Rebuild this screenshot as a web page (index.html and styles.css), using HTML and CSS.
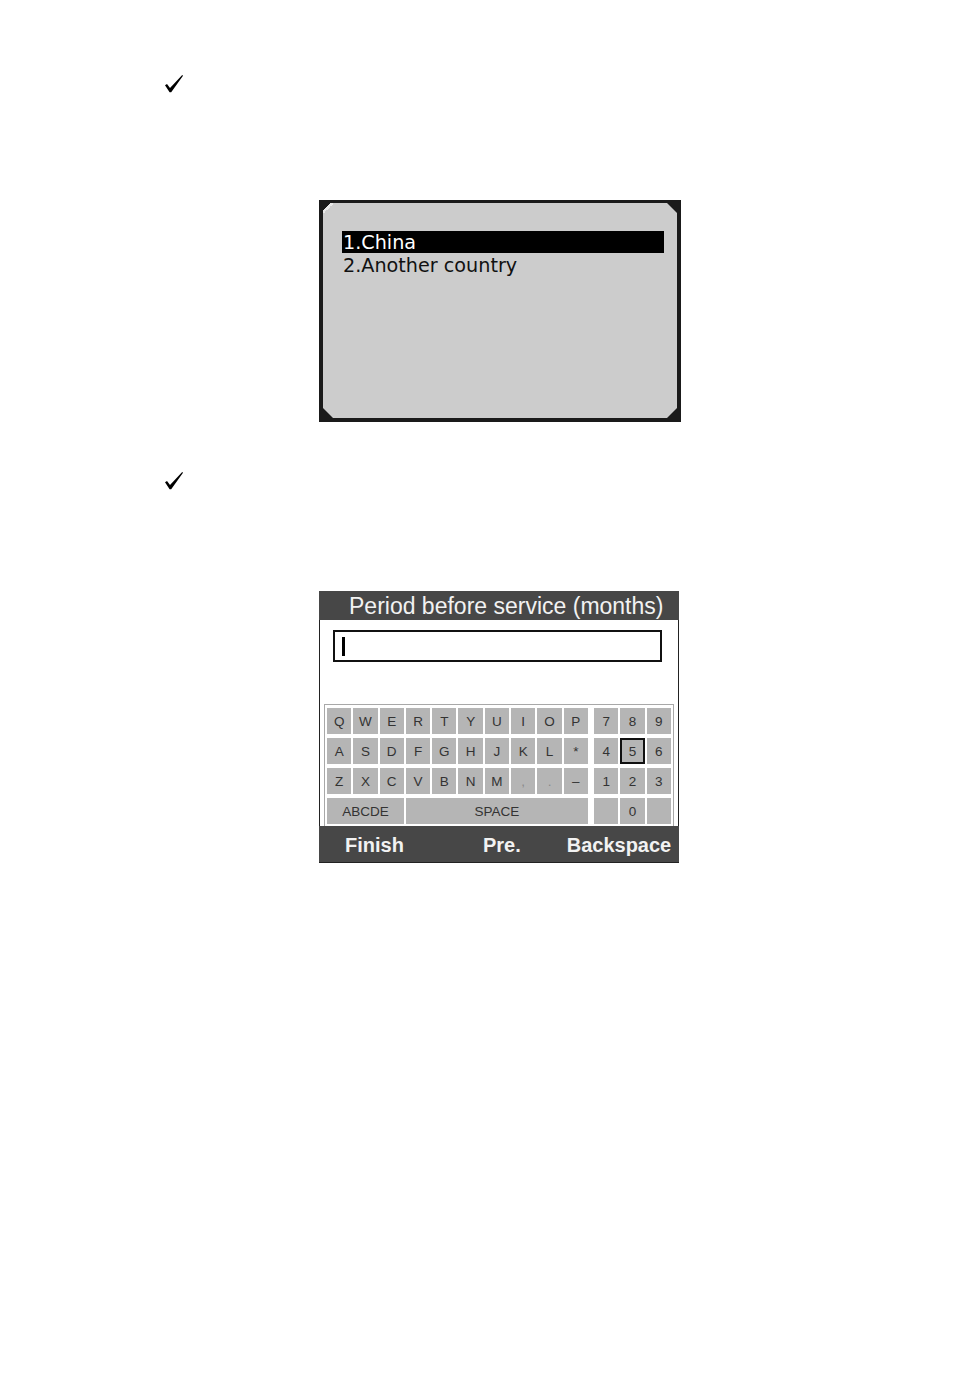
FILE: index.html
```html
<!DOCTYPE html>
<html>
<head>
<meta charset="utf-8">
<link rel="stylesheet" href="styles.css">
</head>
<body>
<div class="page">
  <div class="check check-first">
    <svg width="18" height="18" viewBox="0 0 18 18"><path d="M0 10.3 L2 9 L5 13 L17.2 0 L18 0.8 L6.2 17.2 L4.6 17.2 Z" fill="#000"/></svg>
  </div>

  <div class="lcd">
    <div class="lcd-inner">
      <div class="menu-item selected">1.China</div>
      <div class="menu-item">2.Another country</div>
    </div>
  </div>

  <div class="check check-second">
    <svg width="18" height="18" viewBox="0 0 18 18"><path d="M0 10.3 L2 9 L5 13 L17.2 0 L18 0.8 L6.2 17.2 L4.6 17.2 Z" fill="#000"/></svg>
  </div>

  <div class="kbd-screen">
    <div class="title">Period before service (months)</div>
    <div class="input"><span class="cursor"></span></div>
    <div class="keyboard">
      <div class="keys letters">
        <div class="key">Q</div><div class="key">W</div><div class="key">E</div><div class="key">R</div><div class="key">T</div><div class="key">Y</div><div class="key">U</div><div class="key">I</div><div class="key">O</div><div class="key">P</div>
        <div class="key">A</div><div class="key">S</div><div class="key">D</div><div class="key">F</div><div class="key">G</div><div class="key">H</div><div class="key">J</div><div class="key">K</div><div class="key">L</div><div class="key">*</div>
        <div class="key">Z</div><div class="key">X</div><div class="key">C</div><div class="key">V</div><div class="key">B</div><div class="key">N</div><div class="key">M</div><div class="key dim">,</div><div class="key dim">.</div><div class="key">–</div>
        <div class="key span3">ABCDE</div><div class="key span7">SPACE</div>
      </div>
      <div class="keys numbers">
        <div class="key">7</div><div class="key">8</div><div class="key">9</div>
        <div class="key">4</div><div class="key active">5</div><div class="key">6</div>
        <div class="key">1</div><div class="key">2</div><div class="key">3</div>
        <div class="key"></div><div class="key">0</div><div class="key"></div>
      </div>
    </div>
    <div class="softkeys">
      <span class="sk sk-finish">Finish</span>
      <span class="sk sk-pre">Pre.</span>
      <span class="sk sk-back">Backspace</span>
    </div>
  </div>
</div>
</body>
</html>
```

FILE: styles.css
```css
html, body {
  margin: 0;
  padding: 0;
  background: #fff;
}

.page {
  width: 954px;
  height: 1374px;
  padding-top: 75px;
  box-sizing: border-box;
}

.check {
  margin-left: 165px;
  width: 18px;
  height: 18px;
}
.check svg { display: block; }

.check-second { margin-top: 50px; }

/* LCD menu screen */
.lcd {
  margin-top: 107px;
  margin-left: 319px;
  width: 362px;
  height: 222px;
  box-sizing: border-box;
  background: #1a1a1a;
  padding: 3px 4px 4px 4px;
  position: relative;
}
.lcd::before {
  content: "";
  position: absolute;
  left: 4px;
  top: 3px;
  width: 10px;
  height: 10px;
  background: linear-gradient(135deg, transparent 38%, #e8e8e8 38%, #e8e8e8 55%, transparent 55%);
  z-index: 1;
}
.lcd-inner {
  height: 100%;
  background: #cccccc;
  clip-path: polygon(9px 0, calc(100% - 10px) 0, 100% 10px, 100% calc(100% - 10px), calc(100% - 10px) 100%, 10px 100%, 0 calc(100% - 10px), 0 9px);
  padding: 28px 13px 0 19px;
  box-sizing: border-box;
}
.menu-item {
  font-family: "DejaVu Sans", Verdana, sans-serif;
  font-size: 19.2px;
  line-height: 24px;
  height: 23px;
  color: #111;
  padding-left: 1px;
  white-space: nowrap;
}
.menu-item.selected {
  background: #000;
  color: #fff;
  height: 22px;
  margin-bottom: 1px;
}

/* Keyboard screen */
.kbd-screen {
  margin-top: 101px;
  margin-left: 319px;
  width: 360px;
  box-sizing: border-box;
  border: 1px solid #222;
  border-top: none;
  background: #fff;
}
.title {
  background: #474747;
  color: #f2f2f2;
  font-family: "Liberation Sans", Arial, sans-serif;
  font-size: 23px;
  line-height: 30px;
  height: 29px;
  padding-left: 30px;
  margin: 0 -1px;
  white-space: nowrap;
}
.input {
  margin: 10px 0 0 13px;
  width: 329px;
  height: 32px;
  box-sizing: border-box;
  border: 2px solid #111;
  display: flex;
  align-items: center;
  padding-left: 7px;
}
.cursor {
  display: block;
  width: 3px;
  height: 19px;
  background: #000;
}

.keyboard {
  margin: 42px 0 0 4px;
  width: 350px;
  box-sizing: border-box;
  border: 1px solid #a8a8a8;
  border-bottom: none;
  padding: 3px 2px 2px 2px;
  display: flex;
  gap: 6px;
}
.keys {
  display: grid;
  column-gap: 2px;
  row-gap: 4px;
  grid-auto-rows: 26px;
}
.letters {
  width: 261px;
  grid-template-columns: repeat(10, 1fr);
}
.numbers {
  width: 77px;
  grid-template-columns: repeat(3, 1fr);
}
.key {
  background: #b5b5b5;
  color: #333;
  font-family: "Liberation Sans", Arial, sans-serif;
  font-size: 13.5px;
  display: flex;
  align-items: center;
  justify-content: center;
  box-sizing: border-box;
}
.key.dim { color: #8a8a8a; }
.key.span3 { grid-column: span 3; }
.key.span7 { grid-column: span 7; }
.key.active {
  border: 2px solid #111;
}

.softkeys {
  background: #474747;
  height: 36px;
  padding-top: 2px;
  box-sizing: border-box;
  display: flex;
  align-items: center;
  margin: 0 -1px;
  font-family: "Liberation Sans", Arial, sans-serif;
  font-weight: bold;
  font-size: 20px;
  color: #f2f2f2;
  white-space: nowrap;
}
.sk-finish { margin-left: 26px; }
.sk-pre { margin-left: 79px; }
.sk-back { margin-left: 46px; }
```
